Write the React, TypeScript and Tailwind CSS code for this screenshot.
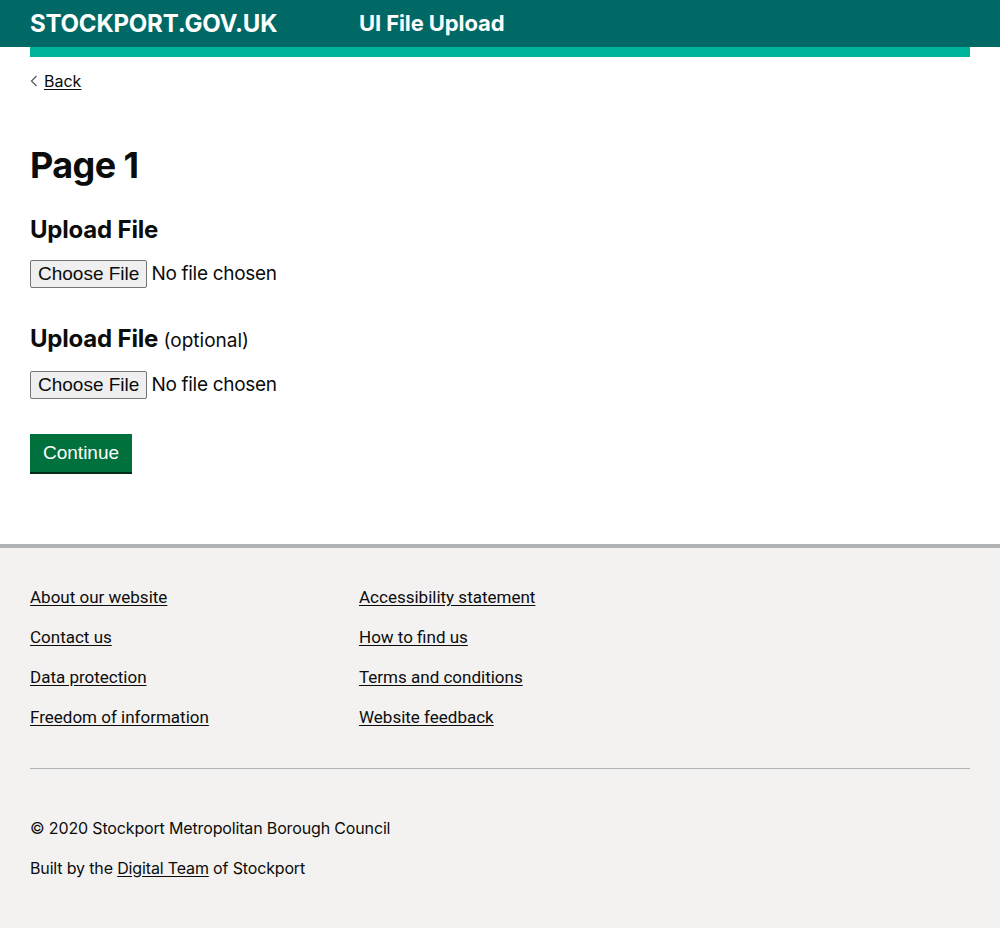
export default function App() {
  const leftLinks = ["About our website", "Contact us", "Data protection", "Freedom of information"];
  const rightLinks = ["Accessibility statement", "How to find us", "Terms and conditions", "Website feedback"];

  return (
    <div className="min-h-[928px] flex flex-col bg-white text-[#0b0c0c] font-['Inter',sans-serif]">
      <header className="bg-[#006966] h-[47px]">
        <div className="px-[30px] h-full flex items-center">
          <span className="text-white font-bold text-[24px] w-[329px] tracking-[-0.2px]">STOCKPORT.GOV.UK</span>
          <span className="text-white font-bold text-[22px] tracking-[-0.1px]">UI File Upload</span>
        </div>
      </header>

      <main className="px-[30px] flex-1">
        <div className="h-[10px] bg-[#00b39b]" />

        <a href="#" className="inline-flex items-center gap-[6px] mt-[12px] text-[16px] text-[#0b0c0c]">
          <svg className="w-[8px] h-[12px]" viewBox="0 0 8 12" fill="none" stroke="#505a5f" strokeWidth={1.2}>
            <path d="M6.5 1L1.5 6l5 5" />
          </svg>
          <span className="underline underline-offset-2">Back</span>
        </a>

        <h1 className="mt-[50px] text-[36px] font-bold leading-[45px] tracking-[-0.6px]">Page 1</h1>

        <div className="mt-[27px]">
          <label className="block text-[24px] font-bold leading-[30px] tracking-[-0.2px]">Upload File</label>
          <input
            type="file"
            className="mt-[15px] block text-[19px] leading-[24px] tracking-[-0.3px] font-['Inter',sans-serif] file:font-['Liberation_Sans',Arial,sans-serif] file:tracking-normal file:border file:border-[#767676] file:rounded-[2px] file:bg-[#efefef] file:px-[7px] file:py-[1px] file:mr-[4px] file:text-[#0b0c0c]"
          />
        </div>

        <div className="mt-[36px]">
          <label className="block text-[24px] font-bold leading-[30px] tracking-[-0.2px]">
            Upload File <span className="text-[19px] font-normal tracking-normal">(optional)</span>
          </label>
          <input
            type="file"
            className="mt-[15px] block text-[19px] leading-[24px] tracking-[-0.3px] font-['Inter',sans-serif] file:font-['Liberation_Sans',Arial,sans-serif] file:tracking-normal file:border file:border-[#767676] file:rounded-[2px] file:bg-[#efefef] file:px-[7px] file:py-[1px] file:mr-[4px] file:text-[#0b0c0c]"
          />
        </div>

        <button className="mt-[35px] mb-[72px] bg-[#00703c] text-white text-[19px] font-['Liberation_Sans',Arial,sans-serif] px-[13px] h-[38px] shadow-[0_2px_0_#002d18]">
          Continue
        </button>
      </main>

      <footer className="bg-[#f3f2f1] border-t-4 border-[#b1b4b6] px-[30px] pb-[51px] font-['Roboto',sans-serif]">
        <div className="flex pt-[39px]">
          <ul className="w-[329px] flex flex-col gap-[20px]">
            {leftLinks.map((l) => (
              <li key={l} className="h-[20px] leading-[20px]">
                <a href="#" className="text-[17px] leading-[20px] text-[#0b0c0c] underline underline-offset-2">{l}</a>
              </li>
            ))}
          </ul>
          <ul className="flex flex-col gap-[20px]">
            {rightLinks.map((l) => (
              <li key={l} className="h-[20px] leading-[20px]">
                <a href="#" className="text-[17px] leading-[20px] text-[#0b0c0c] underline underline-offset-2">{l}</a>
              </li>
            ))}
          </ul>
        </div>

        <hr className="mt-[41px] border-t border-[#b1b4b6]" />

        <div className="pt-[49px] font-['Inter',sans-serif] text-[16px] leading-[20px] tracking-[-0.15px] flex flex-col gap-[20px]">
          <p>© 2020 Stockport Metropolitan Borough Council</p>
          <p>
            Built by the <a href="#" className="underline underline-offset-2 text-[#0b0c0c]">Digital Team</a> of Stockport
          </p>
        </div>
      </footer>
    </div>
  );
}
